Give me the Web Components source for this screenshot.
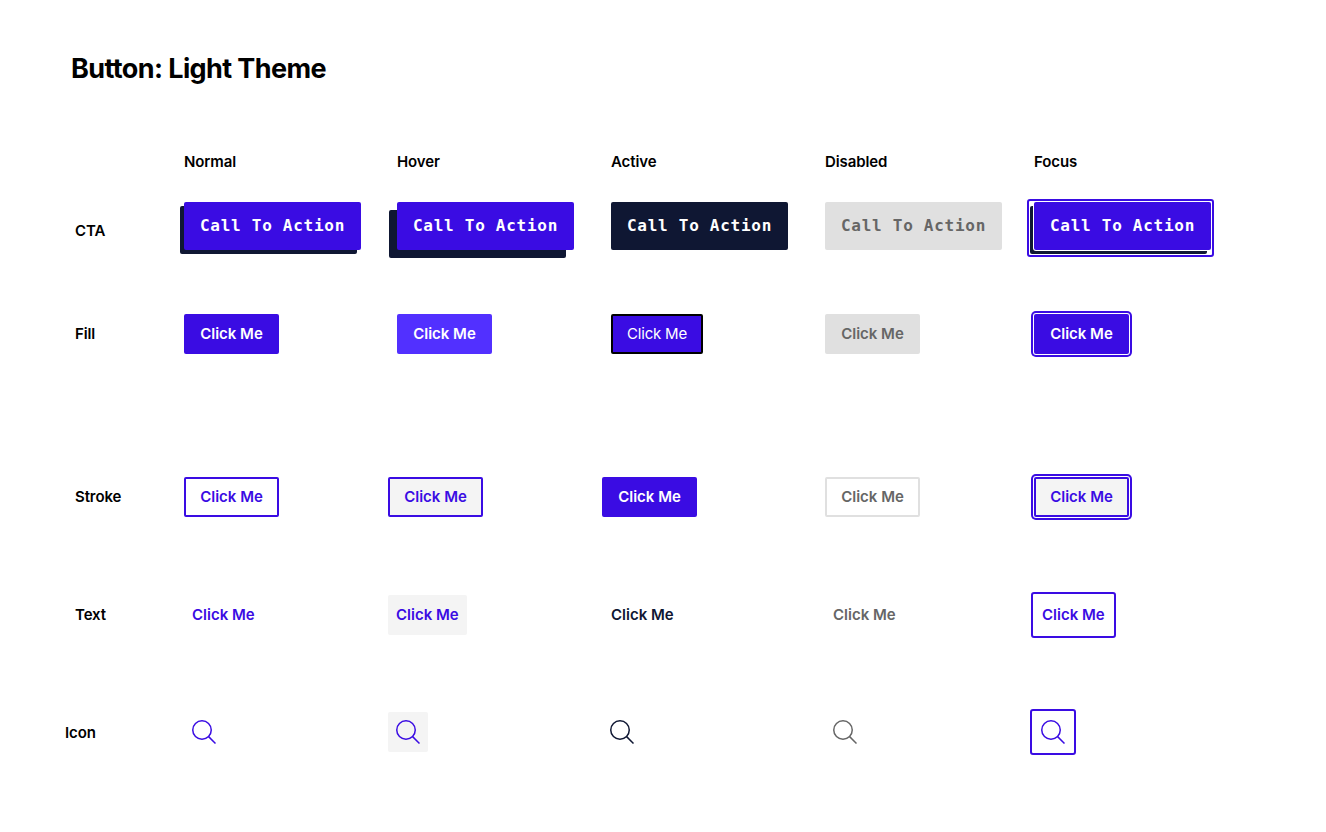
<!DOCTYPE html>
<html>
<head>
<meta charset="utf-8">
<title>Button: Light Theme</title>
<style>
  html, body { margin: 0; background: #fff; }
  body { font-family: "Inter", "Liberation Sans", sans-serif; color: #000; }
</style>
</head>
<body>
<spec-sheet heading="Button: Light Theme">
  <spec-row cols="184px 213px 214px 214px 209px 1fr" top="10" height="30">
    <col-label>Normal</col-label><col-label>Hover</col-label><col-label>Active</col-label><col-label>Disabled</col-label><col-label>Focus</col-label>
  </spec-row>
  <spec-row label="CTA" shift="10" cols="184px 213px 214px 214px 209px 1fr" top="20">
    <ui-button kind="cta">Call To Action</ui-button>
    <ui-button kind="cta" state="hover">Call To Action</ui-button>
    <ui-button kind="cta" state="active">Call To Action</ui-button>
    <ui-button kind="cta" state="disabled">Call To Action</ui-button>
    <ui-button kind="cta" state="focus">Call To Action</ui-button>
  </spec-row>
  <spec-row label="Fill" cols="184px 213px 214px 214px 209px 1fr" top="48">
    <ui-button kind="fill">Click Me</ui-button>
    <ui-button kind="fill" state="hover">Click Me</ui-button>
    <ui-button kind="fill" state="active">Click Me</ui-button>
    <ui-button kind="fill" state="disabled">Click Me</ui-button>
    <ui-button kind="fill" state="focus">Click Me</ui-button>
  </spec-row>
  <spec-row label="Stroke" cols="184px 204px 214px 223px 209px 1fr" top="103">
    <ui-button kind="stroke">Click Me</ui-button>
    <ui-button kind="stroke" state="hover">Click Me</ui-button>
    <ui-button kind="stroke" state="active">Click Me</ui-button>
    <ui-button kind="stroke" state="disabled">Click Me</ui-button>
    <ui-button kind="stroke" state="focus">Click Me</ui-button>
  </spec-row>
  <spec-row label="Text" cols="184px 204px 215px 222px 206px 1fr" top="58">
    <ui-button kind="text">Click Me</ui-button>
    <ui-button kind="text" state="hover">Click Me</ui-button>
    <ui-button kind="text" state="active">Click Me</ui-button>
    <ui-button kind="text" state="disabled">Click Me</ui-button>
    <ui-button kind="text" state="focus">Click Me</ui-button>
  </spec-row>
  <spec-row label="Icon" shift="2" indent="65" cols="184px 204px 214px 223px 205px 1fr" top="57">
    <ui-button kind="icon"><search-icon></search-icon></ui-button>
    <ui-button kind="icon" state="hover"><search-icon></search-icon></ui-button>
    <ui-button kind="icon" state="active"><search-icon></search-icon></ui-button>
    <ui-button kind="icon" state="disabled"><search-icon></search-icon></ui-button>
    <ui-button kind="icon" state="focus"><search-icon></search-icon></ui-button>
  </spec-row>
</spec-sheet>

<script>
class SpecSheet extends HTMLElement {
  constructor() {
    super()
    this.attachShadow({ mode: "open" })
    this.shadowRoot.innerHTML = `
<style>
  :host { display: block; }
  h1 {
    margin: 0;
    padding: 51px 0 0 71px;
    height: 85px;
    font-size: 27px;
    line-height: 36px;
    font-weight: 700;
    letter-spacing: -0.6px;
  }
</style>
<h1>${this.getAttribute("heading")}</h1>
<slot></slot>`
  }
}
customElements.define("spec-sheet", SpecSheet)

class SpecRow extends HTMLElement {
  constructor() {
    super()
    this.attachShadow({ mode: "open" })
    const label = this.getAttribute("label") || ""
    const indent = this.getAttribute("indent") || 75
    const shift = this.getAttribute("shift") || 0
    this.shadowRoot.innerHTML = `
<style>
  :host {
    display: grid;
    grid-template-columns: ${this.getAttribute("cols")};
    align-items: center;
    height: ${this.getAttribute("height") || 60}px;
    margin-top: ${this.getAttribute("top") || 0}px;
  }
  .label {
    grid-column: 1;
    grid-row: 1;
    padding: ${shift}px 0 0 ${indent}px;
    font-size: 15px;
    font-weight: 600;
    letter-spacing: -0.1px;
    line-height: 20px;
  }
</style>
<span class="label">${label}</span>
<slot></slot>`
  }
  connectedCallback() {
    // first child sits in the column after the label
    [...this.children].forEach((el, i) => { el.style.gridRow = 1; el.style.gridColumn = i + 2 })
  }
}
customElements.define("spec-row", SpecRow)

class ColLabel extends HTMLElement {
  constructor() {
    super()
    this.attachShadow({ mode: "open" })
    this.shadowRoot.innerHTML = `
<style>
  :host { display: block; padding-top: 2px; font-size: 15px; font-weight: 600; letter-spacing: -0.1px; line-height: 20px; }
</style>
<slot></slot>`
  }
}
customElements.define("col-label", ColLabel)

const buttonTemplate = document.createElement("template")
buttonTemplate.innerHTML = `
<style>
  :host {
    --blue: #3a0ce3;
    --navy: #0f1733;
    --grey: #e0e0e0;
    --muted: #666;
    display: block;
    justify-self: start;
  }
  .btn {
    position: relative;
    box-sizing: border-box;
    display: flex;
    align-items: center;
    justify-content: center;
    height: 40px;
    padding: 0 16px 2px;
    border-radius: 2px;
    font-size: 15px;
    font-weight: 600;
    white-space: nowrap;
    background: var(--blue);
    color: #fff;
  }

  /* cta */
  :host([kind="cta"]) .btn {
    width: 177px;
    height: 48px;
    padding-bottom: 1px;
    font-family: "DejaVu Sans Mono", monospace;
    font-size: 16px;
    font-weight: 700;
    letter-spacing: 0.73px;
    box-shadow: -4px 4px 0 0 var(--navy);
  }
  :host([kind="cta"][state="hover"]) .btn { box-shadow: -8px 8px 0 0 var(--navy); }
  :host([kind="cta"][state="active"]) .btn { background: var(--navy); box-shadow: none; }
  :host([kind="cta"][state="disabled"]) .btn { background: var(--grey); color: var(--muted); box-shadow: none; }
  :host([kind="cta"][state="focus"]) .btn { box-shadow: 0 0 0 1px #fff, -4px 4px 0 0 var(--navy); }
  :host([kind="cta"][state="focus"]) .btn::after {
    content: "";
    position: absolute;
    top: -3px; right: -3px; bottom: -7px; left: -7px;
    border: 2px solid var(--blue);
    border-radius: 3px;
  }

  /* fill */
  :host([kind="fill"]) .btn { width: 95px; }
  :host([kind="fill"][state="hover"]) .btn { background: #5230ff; }
  :host([kind="fill"][state="active"]) .btn { width: 92px; border: 2px solid #000; font-weight: 400; letter-spacing: -0.2px; }
  :host([kind="fill"][state="disabled"]) .btn { background: var(--grey); color: var(--muted); }
  :host([kind="fill"][state="focus"]) .btn { box-shadow: 0 0 0 1px #fff, 0 0 0 3px var(--blue); }

  /* stroke */
  :host([kind="stroke"]) .btn { width: 95px; background: #fff; border: 2px solid var(--blue); color: var(--blue); }
  :host([kind="stroke"][state="hover"]) .btn { background: #f4f4f4; }
  :host([kind="stroke"][state="active"]) .btn { background: var(--blue); color: #fff; }
  :host([kind="stroke"][state="disabled"]) .btn { border-color: var(--grey); color: var(--muted); }
  :host([kind="stroke"][state="focus"]) .btn { background: #f4f4f4; box-shadow: 0 0 0 1px #fff, 0 0 0 3px var(--blue); }

  /* text */
  :host([kind="text"]) .btn { padding: 0 8px 2px; background: transparent; color: var(--blue); }
  :host([kind="text"][state="hover"]) .btn { background: #f4f4f4; }
  :host([kind="text"][state="active"]) .btn { color: var(--navy); }
  :host([kind="text"][state="disabled"]) .btn { color: var(--muted); }
  :host([kind="text"][state="focus"]) .btn { height: 46px; padding: 0 9px 2px; border: 2px solid var(--blue); border-radius: 3px; }

  /* icon */
  :host([kind="icon"]) .btn { width: 40px; padding: 0; background: transparent; color: var(--blue); }
  :host([kind="icon"][state="hover"]) .btn { background: #f4f4f4; }
  :host([kind="icon"][state="active"]) .btn { color: var(--navy); }
  :host([kind="icon"][state="disabled"]) .btn { color: var(--muted); }
  :host([kind="icon"][state="focus"]) .btn { width: 46px; height: 46px; border: 2px solid var(--blue); border-radius: 3px; }
</style>
<div class="btn"><slot></slot></div>`

class UiButton extends HTMLElement {
  constructor() {
    super()
    this.attachShadow({ mode: "open" })
    this.shadowRoot.appendChild(buttonTemplate.content.cloneNode(true))
  }
}
customElements.define("ui-button", UiButton)

class SearchIcon extends HTMLElement {
  constructor() {
    super()
    this.attachShadow({ mode: "open" })
    this.shadowRoot.innerHTML = `
<style>
  :host { display: block; width: 24px; height: 24px; }
  svg { display: block; }
</style>
<svg width="24" height="24" viewBox="0 0 24 24" fill="none" stroke="currentColor" stroke-width="1.5">
  <circle cx="10" cy="10" r="9.25"/>
  <path d="M16.6 16.6L23.5 23.5"/>
</svg>`
  }
}
customElements.define("search-icon", SearchIcon)
</script>
</body>
</html>
